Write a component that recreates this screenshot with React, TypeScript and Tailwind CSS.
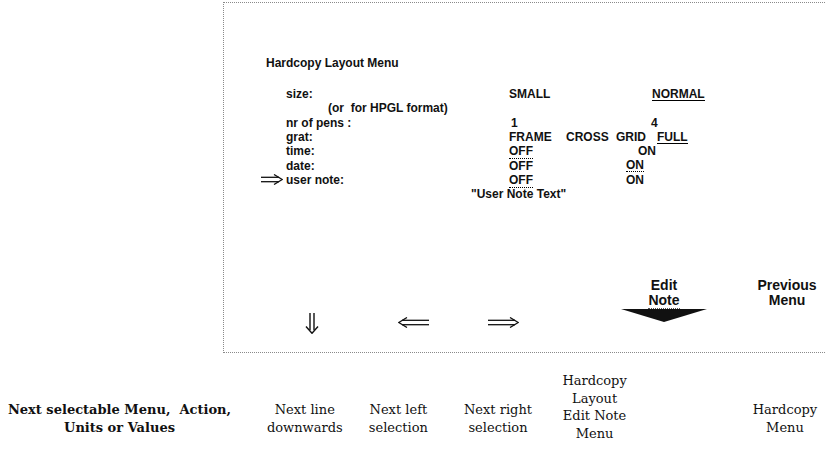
import React from "react";

const sans = { fontFamily: '"Liberation Sans", Arial, sans-serif' };
const serif = { fontFamily: '"DejaVu Serif", "Liberation Serif", serif' };

function Row({ children, pl = "pl-[62px]" }: { children: React.ReactNode; pl?: string }) {
  return <div className={`flex h-[14.3px] items-center leading-[14px] ${pl}`}>{children}</div>;
}

function RightArrow({ w = 31 }: { w?: number }) {
  return (
    <svg width={w} height="11" viewBox={`0 0 ${w} 11`} fill="none" stroke="#111" strokeWidth="1.3">
      <line x1="0" y1="3.3" x2={w - 4} y2="3.3" />
      <line x1="0" y1="7.7" x2={w - 4} y2="7.7" />
      <polyline points={`${w - 9},0.5 ${w - 0.8},5.5 ${w - 9},10.5`} />
    </svg>
  );
}

function LeftArrow({ w = 31 }: { w?: number }) {
  return (
    <svg width={w} height="11" viewBox={`0 0 ${w} 11`} fill="none" stroke="#111" strokeWidth="1.3">
      <line x1="4" y1="3.3" x2={w} y2="3.3" />
      <line x1="4" y1="7.7" x2={w} y2="7.7" />
      <polyline points="9,0.5 0.8,5.5 9,10.5" />
    </svg>
  );
}

function DownArrow() {
  return (
    <svg width="14" height="21" viewBox="0 0 14 21" fill="none" stroke="#111" strokeWidth="1.4">
      <line x1="5" y1="0" x2="5" y2="17" />
      <line x1="9" y1="0" x2="9" y2="17" />
      <polyline points="1,13.5 7,20.3 13,13.5" />
    </svg>
  );
}

export default function App() {
  return (
    <div className="relative h-[461px] w-[825px] overflow-hidden bg-white text-[#111]">
      <div className="flex h-[353px] pt-[2px]">
        <div
          className="ml-[223px] flex h-[351px] flex-1 flex-col border-l border-t border-b border-dotted border-[#8a8a8a] text-[12px] font-bold"
          style={sans}
        >
          <div className="pl-[42px] pt-[53px] leading-[14px]">Hardcopy Layout Menu</div>
          <div className="mt-[17px] flex flex-col">
            <Row>
              <span className="w-[223px]">size:</span>
              <span className="w-[143px]">SMALL</span>
              <span className="border-b border-black leading-[12px]">NORMAL</span>
            </Row>
            <Row pl="pl-[104px]">(or&nbsp; for HPGL format)</Row>
            <Row>
              <span className="w-[225px]">nr of pens :</span>
              <span className="w-[140px]">1</span>
              <span>4</span>
            </Row>
            <Row>
              <span className="w-[223px]">grat:</span>
              <span className="w-[57px]">FRAME</span>
              <span className="w-[50px]">CROSS</span>
              <span className="w-[41px]">GRID</span>
              <span className="border-b border-black leading-[12px]">FULL</span>
            </Row>
            <Row>
              <span className="w-[223px]">time:</span>
              <span className="w-[129px]">
                <span className="border-b border-dotted border-black leading-[12px]">OFF</span>
              </span>
              <span>ON</span>
            </Row>
            <Row>
              <span className="w-[223px]">date:</span>
              <span className="w-[117px]">OFF</span>
              <span className="border-b border-dotted border-black leading-[12px]">ON</span>
            </Row>
            <Row pl="pl-[37px]">
              <span className="flex w-[25px] items-center">
                <RightArrow w={22} />
              </span>
              <span className="w-[223px]">user note:</span>
              <span className="w-[117px]">
                <span className="border-b border-dotted border-black leading-[12px]">OFF</span>
              </span>
              <span>ON</span>
            </Row>
            <Row pl="pl-[247px]">"User Note Text"</Row>
          </div>
          <div className="mt-auto mb-[14px] flex h-[60px] items-start">
            <div className="w-[73px]" />
            <div className="flex w-[30px] justify-center pt-[35px]">
              <DownArrow />
            </div>
            <div className="w-[71px]" />
            <div className="flex w-[31px] justify-center pt-[39px]">
              <LeftArrow />
            </div>
            <div className="w-[59px]" />
            <div className="flex w-[31px] justify-center pt-[39px]">
              <RightArrow />
            </div>
            <div className="w-[98px]" />
            <div className="flex w-[94px] flex-col items-center text-[14px] leading-[15px]">
              <div className="text-center">Edit</div>
              <div className="border-b border-dotted border-[#555] text-center">Note</div>
              <svg width="86" height="14" viewBox="0 0 86 14" className="-mt-[1px]">
                <polygon points="0,1 86,1 43,14" fill="#111" />
              </svg>
            </div>
            <div className="w-[30px]" />
            <div className="w-[92px] text-center text-[14px] leading-[15px]">
              Previous
              <br />
              Menu
            </div>
          </div>
        </div>
      </div>
      <div className="mt-[19px] flex text-[13px] leading-[17.5px]" style={serif}>
        <div className="w-[240px] whitespace-nowrap pt-[29px] text-center font-bold">
          Next selectable Menu,&nbsp; Action,
          <br />
          Units or Values
        </div>
        <div className="w-[20px]" />
        <div className="w-[92px] pt-[29px] text-center">
          Next line
          <br />
          downwards
        </div>
        <div className="w-[8px]" />
        <div className="w-[80px] pt-[29px] text-center">
          Next left
          <br />
          selection
        </div>
        <div className="w-[15px]" />
        <div className="w-[90px] pt-[29px] text-center">
          Next right
          <br />
          selection
        </div>
        <div className="w-[2px]" />
        <div className="w-[100px] text-center">
          Hardcopy
          <br />
          Layout
          <br />
          Edit Note
          <br />
          Menu
        </div>
        <div className="w-[101px]" />
        <div className="w-[80px] shrink-0 pt-[29px] text-center">
          Hardcopy
          <br />
          Menu
        </div>
      </div>
    </div>
  );
}
